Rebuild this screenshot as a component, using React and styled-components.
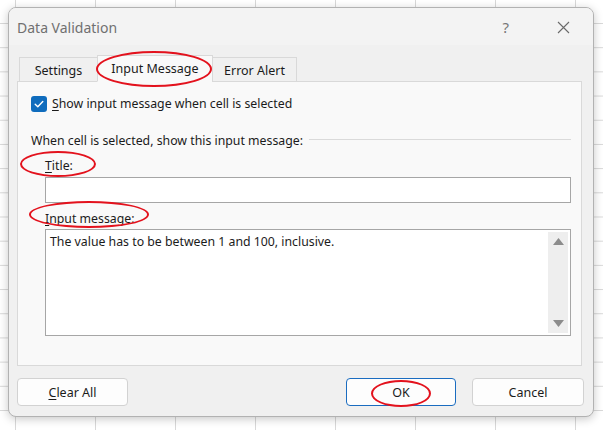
import React from "react";
import styled, { createGlobalStyle } from "styled-components";

const Global = createGlobalStyle`
  html, body { margin: 0; padding: 0; }
  body { font-family: "Noto Sans", "Open Sans", sans-serif; }
  * { box-sizing: border-box; }
`;

const Page = styled.div`
  position: relative;
  width: 603px;
  height: 430px;
  overflow: hidden;
  padding: 7px 0 0 8px;
  background-color: #ffffff;
  background-image:
    linear-gradient(to right, #d8d8d8 1px, transparent 1px),
    linear-gradient(to bottom, #d8d8d8 1px, transparent 1px);
  background-size: 80px 24.2px;
  background-position: 15px 23px;
`;

const Dialog = styled.div`
  width: 586px;
  height: 410px;
  display: flex;
  flex-direction: column;
  background: #f0f0f0;
  border: 1px solid #b2b2b2;
  border-radius: 8px;
  overflow: hidden;
  box-shadow: 0 2px 10px rgba(0, 0, 0, 0.22);
  font-size: 12px;
  color: #1b1b1b;
`;

const TitleBar = styled.div`
  height: 37px;
  flex: none;
  display: flex;
  align-items: center;
  padding: 1px 23px 0 8px;
  background: #f3f3f3;
`;

const TitleText = styled.div`
  flex: 1;
  font-size: 14px;
  color: #707070;
  padding-top: 1px;
`;

const Help = styled.div`
  font-size: 15px;
  color: #777;
  margin-right: 48px;
`;

const Body = styled.div`
  flex: 1;
  display: flex;
  flex-direction: column;
  padding: 10px 11px 9px 8px;
`;

const TabRow = styled.div`
  display: flex;
  align-items: flex-end;
  height: 27px;
  padding-left: 2px;
  position: relative;
  z-index: 1;
  margin-bottom: -1px;
`;

const Tab = styled.div`
  width: ${(p) => p.$w}px;
  height: ${(p) => (p.$active ? 27 : 25)}px;
  display: flex;
  align-items: center;
  justify-content: center;
  font-size: 12.5px;
  border: 1px solid #d9d9d9;
  border-bottom: ${(p) => (p.$active ? "1px solid #f9f9f9" : "1px solid #d9d9d9")};
  margin-left: ${(p) => (p.$first ? 0 : -1)}px;
  background: ${(p) => (p.$active ? "#f9f9f9" : "#f0f0f0")};
  color: #1b1b1b;
  padding-top: ${(p) => (p.$active ? 0 : 1)}px;
`;

const Panel = styled.div`
  height: 285px;
  background: #f9f9f9;
  border: 1px solid #d9d9d9;
  padding: 13px 10px 0 13px;
  display: flex;
  flex-direction: column;
`;

const CheckRow = styled.label`
  display: flex;
  align-items: center;
  gap: 5px;
  font-size: 12.3px;
  height: 17px;
`;

const Box = styled.span`
  width: 16px;
  height: 16px;
  border-radius: 3px;
  background: #0f6cbd;
  display: flex;
  align-items: center;
  justify-content: center;
`;

const Acc = styled.span`
  text-decoration: underline;
  text-underline-offset: 2px;
  text-decoration-thickness: 1px;
`;

const SectionRow = styled.div`
  display: flex;
  align-items: center;
  gap: 6px;
  margin-top: 20px;
  font-size: 12.3px;
  height: 17px;
`;

const Rule = styled.div`
  flex: 1;
  height: 1px;
  background: #dadada;
  margin-top: -3px;
`;

const Indented = styled.div`
  padding-left: 14px;
  display: flex;
  flex-direction: column;
`;

const FieldLabel = styled.div`
  font-size: 12.3px;
  height: 17px;
  display: flex;
  align-items: center;
  margin-top: ${(p) => p.$mt}px;
`;

const TextBox = styled.div`
  height: 26px;
  margin-top: 3px;
  background: #fff;
  border: 1px solid #a6a6a6;
`;

const TextArea = styled.div`
  height: 107px;
  margin-top: 2px;
  background: #fff;
  border: 1px solid #a6a6a6;
  display: flex;
  padding: 2px 2px 2px 4px;
`;

const AreaText = styled.div`
  flex: 1;
  font-size: 12.3px;
  line-height: 18px;
  padding-top: 1px;
`;

const ScrollBar = styled.div`
  width: 20px;
  background: #eeeeee;
  display: flex;
  flex-direction: column;
  justify-content: space-between;
  align-items: center;
  padding: 6px 0 6px;
`;

const Buttons = styled.div`
  display: flex;
  align-items: center;
  margin-top: 12px;
  margin-right: -2px;
`;

const Button = styled.div`
  width: ${(p) => p.$w}px;
  height: 28px;
  display: flex;
  align-items: center;
  justify-content: center;
  font-size: 12.5px;
  background: #fdfdfd;
  border: 1px solid ${(p) => (p.$primary ? "#1a6cc0" : "#d2d2d2")};
  border-radius: 4px;
  margin-left: ${(p) => p.$ml || 0}px;
  color: #1b1b1b;
`;

const Spacer = styled.div`
  flex: 1;
`;

const Annotation = styled.div`
  position: absolute;
  z-index: 5;
  left: ${(p) => p.$x}px;
  top: ${(p) => p.$y}px;
  width: ${(p) => p.$w}px;
  height: ${(p) => p.$h}px;
  border: 2.5px solid #e3121d;
  border-radius: 50%;
  pointer-events: none;
`;

const Close = () => (
  <svg width="13" height="13" viewBox="0 0 13 13">
    <path d="M1 1 L12 12 M12 1 L1 12" stroke="#6a6a6a" strokeWidth="1.1" fill="none" />
  </svg>
);

const Check = () => (
  <svg width="12" height="12" viewBox="0 0 12 12">
    <path d="M2.2 6.3 L4.8 8.8 L9.8 3.4" stroke="#fff" strokeWidth="1.4" fill="none" strokeLinecap="round" strokeLinejoin="round" />
  </svg>
);

const Arrow = ({ down }) => (
  <svg width="11" height="7" viewBox="0 0 11 7">
    <polygon points={down ? "0,0 11,0 5.5,7" : "0,7 11,7 5.5,0"} fill="#8c8c8c" />
  </svg>
);

export default function App() {
  return (
    <>
      <Global />
      <Page>
        <Dialog>
          <TitleBar>
            <TitleText>Data Validation</TitleText>
            <Help>?</Help>
            <Close />
          </TitleBar>
          <Body>
            <TabRow>
              <Tab $first $w={79}>Settings</Tab>
              <Tab $active $w={116}>Input Message</Tab>
              <Tab $w={85}>Error Alert</Tab>
            </TabRow>
            <Panel>
              <CheckRow>
                <Box><Check /></Box>
                <span><Acc>S</Acc>how input message when cell is selected</span>
              </CheckRow>
              <SectionRow>
                <span>When cell is selected, show this input message:</span>
                <Rule />
              </SectionRow>
              <Indented>
                <FieldLabel $mt={8}><span><Acc>T</Acc>itle:</span></FieldLabel>
                <TextBox />
                <FieldLabel $mt={7}><span><Acc>I</Acc>nput message:</span></FieldLabel>
                <TextArea>
                  <AreaText>The value has to be between 1 and 100, inclusive.</AreaText>
                  <ScrollBar>
                    <Arrow />
                    <Arrow down />
                  </ScrollBar>
                </TextArea>
              </Indented>
            </Panel>
            <Buttons>
              <Button $w={111}><span><Acc>C</Acc>lear All</span></Button>
              <Spacer />
              <Button $w={110} $primary>OK</Button>
              <Button $w={112} $ml={16}>Cancel</Button>
            </Buttons>
          </Body>
        </Dialog>
        <Annotation $x={96} $y={51} $w={116} $h={36} />
        <Annotation $x={20} $y={151} $w={76} $h={26} />
        <Annotation $x={29} $y={201} $w={120} $h={27} />
        <Annotation $x={371} $y={380} $w={60} $h={27} />
      </Page>
    </>
  );
}
